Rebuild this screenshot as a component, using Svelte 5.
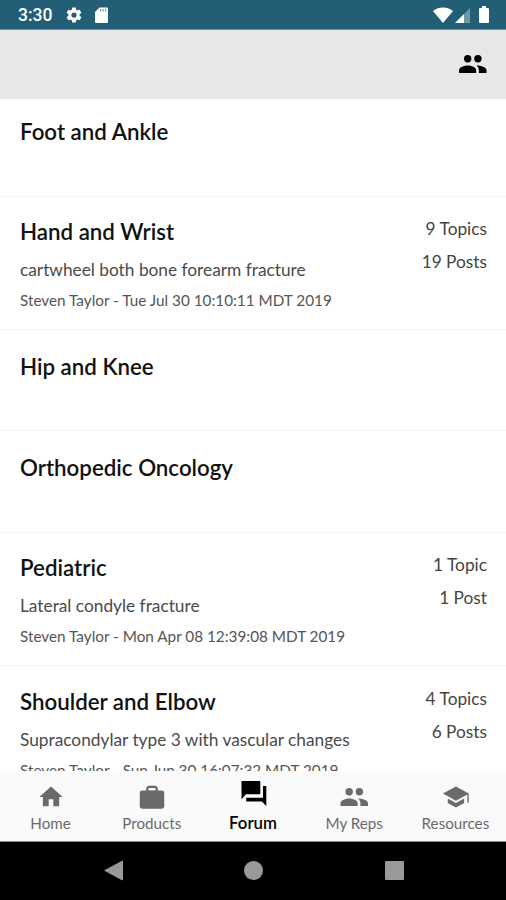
<script>
  const people = 'M5 3.700a3.700 3.700 0 1 1 7.400 0a3.700 3.700 0 0 1-7.400 0zM15.200 3.700a3.700 3.700 0 1 1 7.400 0a3.700 3.700 0 0 1-7.400 0zM0 18v-2.800c0-3.100 5.500-4.700 8.700-4.700s8.500 1.600 8.500 4.700V18zM17.600 10.500c4 0 9.900 1.600 9.900 4.700V18h-7.600v-2.600c0-2-.9-3.700-2.300-4.900z';
  const rows = [
    { title: 'Foot and Ankle', height: 98, top: 20 },
    { title: 'Hand and Wrist', height: 133, top: 22, topics: '9 Topics', posts: '19 Posts', text: 'cartwheel both bone forearm fracture', by: 'Steven Taylor - Tue Jul 30 10:10:11 MDT 2019' },
    { title: 'Hip and Knee', height: 101, top: 24 },
    { title: 'Orthopedic Oncology', height: 102, top: 24 },
    { title: 'Pediatric', height: 133, top: 22, topics: '1 Topic', posts: '1 Post', text: 'Lateral condyle fracture', by: 'Steven Taylor - Mon Apr 08 12:39:08 MDT 2019' },
    { title: 'Shoulder and Elbow', height: 133, top: 23, topics: '4 Topics', posts: '6 Posts', text: 'Supracondylar type 3 with vascular changes', by: 'Steven Taylor - Sun Jun 30 16:07:32 MDT 2019' }
  ];
  const tabs = [
    { name: 'Home', box: '0 0 24 24', d: 'M10 20v-6h4v6h5v-8h3L12 3 2 12h3v8z' },
    { name: 'Products', box: '0 1 24 24', d: 'M20.500 7.500H17V5l-1.700-1.700H8.700L7 5v2.500H3.500a2 2 0 0 0-2 2v11.500a2 2 0 0 0 2 2h17a2 2 0 0 0 2-2V9.500a2 2 0 0 0-2-2zM9 7.500V5.300h6v2.200z' },
    { name: 'Forum', box: '-2.500 2 28 28', active: true, d: 'M0 0h18.800v13.200H4.500L0 18.300zM21.500 5h3.300v20l-4.500-4.500H4.700v-3.800h16.800z' },
    { name: 'My Reps', box: '-.5 -5 28 28', d: people },
    { name: 'Resources', box: '-.8 0 24 24', d: 'M12 3 .8 9 12 15.200 21.800 9.900V17H23V9zM5 13.200v3.900L12 21l7-3.900v-3.900l-7 3.900z' }
  ];
</script>

<div class="screen">
  <div class="status">
    <span class="clock">3:30</span>
    <svg class="gear" viewBox="0 0 24 24"><path d="M19.430 12.980c.04-.32.07-.64.07-.98s-.03-.66-.07-.98l2.110-1.650a.5.5 0 0 0 .12-.64l-2-3.460a.5.5 0 0 0-.61-.22l-2.490 1a7.300 7.300 0 0 0-1.690-.98l-.38-2.650A.49.49 0 0 0 14 2h-4a.49.49 0 0 0-.49.42l-.38 2.650c-.61.25-1.170.59-1.690.98l-2.490-1a.49.49 0 0 0-.61.22l-2 3.460a.49.49 0 0 0 .12.640l2.110 1.650c-.04.32-.07.65-.07.98s.03.66.07.98l-2.110 1.650a.5.5 0 0 0-.12.640l2 3.460c.12.22.39.3.61.22l2.490-1c.52.4 1.080.73 1.690.98l.38 2.650c.03.24.24.42.49.42h4c.25 0 .46-.18.49-.42l.38-2.650c.61-.25 1.170-.59 1.690-.98l2.490 1c.23.09.49 0 .61-.22l2-3.460a.5.5 0 0 0-.12-.64zM12 15.500a3.500 3.500 0 1 1 0-7 3.500 3.500 0 0 1 0 7z"/></svg>
    <svg class="card" viewBox="0 0 13 16"><path d="M4.500.5H12a1 1 0 0 1 1 1V15a1 1 0 0 1-1 1H1a1 1 0 0 1-1-1V5z"/><path class="pins" d="M5 2h1.200v2.500H5zM7.500 2h1.200v2.500H7.500zM10 2h1.200v2.500H10z"/></svg>
    <span class="fill"></span>
    <svg class="wifi" viewBox="0 0 20 16"><path d="M10 16 0 4C3 1.500 6.500.5 10 .5S17 1.500 20 4z"/></svg>
    <svg class="signal" viewBox="0 0 15 15"><path class="dim" d="M0 15 15 0v15z"/><path d="M0 15 9 6v9z"/></svg>
    <svg class="battery" viewBox="0 0 10 17"><path d="M3 0h4v2h2a1 1 0 0 1 1 1v13a1 1 0 0 1-1 1H1a1 1 0 0 1-1-1V3a1 1 0 0 1 1-1h2z"/></svg>
  </div>
  <header>
    <svg viewBox="0 0 28 18"><path d={people} /></svg>
  </header>
  <main>
    {#each rows as row}
      <section style="height: {row.height}px; padding-top: {row.top}px">
        <div class="left">
          <h2>{row.title}</h2>
          {#if row.text}
            <p class="text">{row.text}</p>
            <p class="by">{row.by}</p>
          {/if}
        </div>
        {#if row.topics}
          <div class="counts"><span>{row.topics}</span><span>{row.posts}</span></div>
        {/if}
      </section>
    {/each}
  </main>
  <nav>
    {#each tabs as tab}
      <div class="tab" class:active={tab.active}>
        <svg viewBox={tab.box}><path d={tab.d} /></svg>
        <span>{tab.name}</span>
      </div>
    {/each}
  </nav>
  <footer>
    <svg viewBox="0 0 19 21"><path d="M0 10.500 18 .8q1-.5 1 .7v18q0 1.200-1 .7z"/></svg>
    <i class="circle"></i>
    <i class="square"></i>
  </footer>
</div>

<style>
  .screen { width: 506px; height: 900px; display: flex; flex-direction: column; overflow: hidden; background: #fff; font-family: Lato, sans-serif; color: #111; }
  svg { display: block; fill: currentColor; flex: none; overflow: visible; }
  .status { height: 30px; flex: none; box-sizing: border-box; padding: 1px 17px 0 18px; display: flex; align-items: center; background: #235e77; color: #fff; border-bottom: 1px solid #6f929f; }
  .clock { font: 500 17.500px Roboto, sans-serif; width: 47px; }
  .gear { width: 18px; height: 18px; margin-right: 12px; }
  .card { width: 13px; height: 16px; }
  .pins { fill: #7d9fad; }
  .fill { flex: 1; }
  .wifi { width: 20px; height: 16px; margin: 0 2px 1px 0; }
  .signal { width: 15px; height: 15px; margin: 0 9px 0 0; }
  .dim { opacity: .35; }
  .battery { width: 10px; height: 17px; margin-bottom: 1px; }
  header { height: 69px; flex: none; box-sizing: border-box; background: #e7e7e7; display: flex; justify-content: flex-end; padding: 25px 19px 0 0; color: #000; }
  header svg { width: 28px; height: 18px; }
  main { height: 672px; flex: none; overflow: hidden; }
  section { box-sizing: border-box; border-bottom: 1px solid #f5f5f5; padding: 0 19px 0 20px; display: flex; justify-content: space-between; }
  h2 { margin: 0; font-size: 22.300px; line-height: 26px; font-weight: 600; white-space: nowrap; }
  p { margin: 0; white-space: nowrap; font-weight: 400; color: #4a4a4a; }
  .text { font-size: 17.300px; line-height: 22px; margin-top: 14px; }
  .by { font-size: 15.300px; line-height: 20px; margin-top: 9px; color: #555; }
  .counts { display: flex; flex-direction: column; align-items: flex-end; font-size: 17.300px; line-height: 33px; margin-top: -7px; color: #444; }
  nav { height: 71px; flex: none; box-sizing: border-box; display: flex; background: #fafafa; border-bottom: 1px solid #888; color: #6a6a6a; }
  .tab { flex: 1; display: flex; flex-direction: column; align-items: center; padding-top: 12px; font-size: 15.200px; line-height: 20px; }
  .tab svg { width: 28px; height: 28px; margin-bottom: 2px; }
  .active { color: #000; font-weight: 600; font-size: 16.800px; }
  footer { flex: 1; box-sizing: border-box; padding: 0 0 1px 1px; background: #000; display: flex; align-items: center; justify-content: center; gap: 121.500px; color: #999; }
  footer svg { width: 19px; height: 21px; }
  .circle { width: 19px; height: 19px; border-radius: 50%; background: #999; }
  .square { width: 19px; height: 19px; border-radius: 1px; background: #999; }
</style>
